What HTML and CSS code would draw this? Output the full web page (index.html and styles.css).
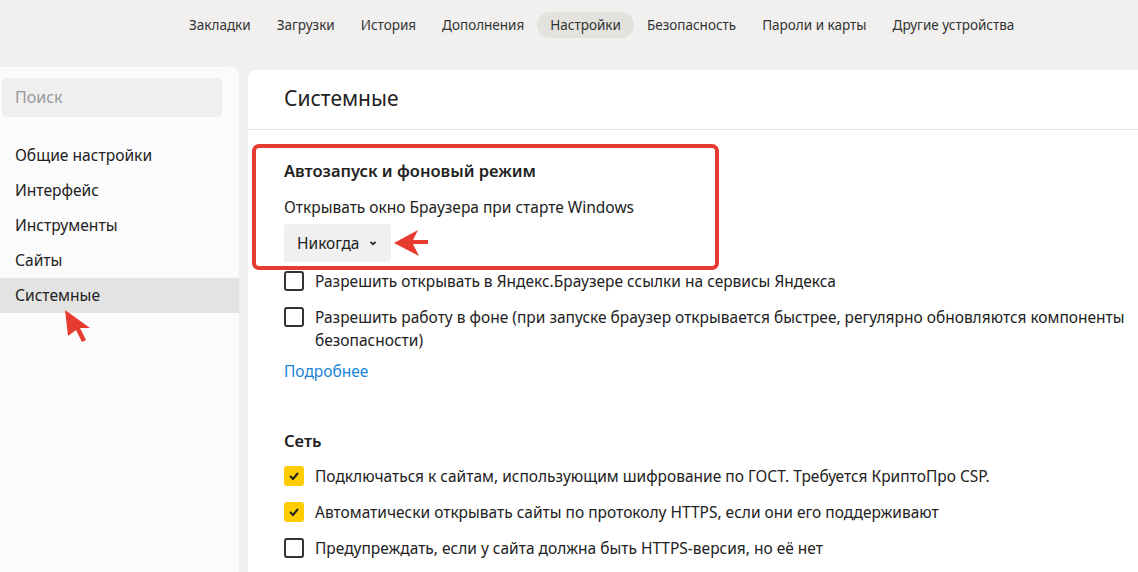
FILE: index.html
```html
<!DOCTYPE html>
<html lang="ru">
<head>
    <meta charset="UTF-8">
    <meta name="viewport" content="width=device-width, initial-scale=1.0">
    <title>Настройки</title>
    <link rel="stylesheet" href="styles.css">
</head>
<body>

<nav class="topnav">
    <a class="nav-item">Закладки</a>
    <a class="nav-item">Загрузки</a>
    <a class="nav-item">История</a>
    <a class="nav-item">Дополнения</a>
    <a class="nav-item active">Настройки</a>
    <a class="nav-item">Безопасность</a>
    <a class="nav-item">Пароли и карты</a>
    <a class="nav-item">Другие устройства</a>
</nav>

<div class="layout">
    <aside class="sidebar">
        <div class="search">Поиск</div>
        <ul class="menu">
            <li>Общие настройки</li>
            <li>Интерфейс</li>
            <li>Инструменты</li>
            <li>Сайты</li>
            <li class="current">Системные</li>
        </ul>
        <svg class="cursor" width="30" height="34" viewBox="0 0 30 34">
            <path d="M1 1 L26 19 L16 19 L22 31 L18 33 L12 21 L4 27 Z" fill="#e63b2e"/>
        </svg>
    </aside>

    <main class="content">
        <h1 class="page-title">Системные</h1>

        <section class="section">
            <div class="highlight">
                <h2 class="section-title">Автозапуск и фоновый режим</h2>
                <p class="label">Открывать окно Браузера при старте Windows</p>
                <div class="select-row">
                    <button class="select">Никогда
                        <svg width="10" height="10" viewBox="0 0 10 10"><path d="M2.5 3.8 L5 6.3 L7.5 3.8" fill="none" stroke="#222" stroke-width="1.7"/></svg>
                    </button>
                    <svg class="pointer" width="36" height="30" viewBox="0 0 36 30">
                        <path d="M1 15 L25 2 L20 12 L35 12 L35 16 L20 16 L26 28 Z" fill="#e63b2e"/>
                    </svg>
                </div>
            </div>

            <label class="check">
                <span class="box"></span>
                <span>Разрешить открывать в Яндекс.Браузере ссылки на сервисы Яндекса</span>
            </label>
            <label class="check">
                <span class="box"></span>
                <span>Разрешить работу в фоне (при запуске браузер открывается быстрее, регулярно обновляются компоненты<br>безопасности)</span>
            </label>
            <a class="more">Подробнее</a>
        </section>

        <section class="section">
            <h2 class="section-title">Сеть</h2>
            <label class="check">
                <span class="box checked"><svg width="14" height="14" viewBox="0 0 14 14"><path d="M3 7 L6 10 L11 4" fill="none" stroke="#222" stroke-width="2"/></svg></span>
                <span>Подключаться к сайтам, использующим шифрование по ГОСТ. Требуется КриптоПро CSP.</span>
            </label>
            <label class="check">
                <span class="box checked"><svg width="14" height="14" viewBox="0 0 14 14"><path d="M3 7 L6 10 L11 4" fill="none" stroke="#222" stroke-width="2"/></svg></span>
                <span>Автоматически открывать сайты по протоколу HTTPS, если они его поддерживают</span>
            </label>
            <label class="check">
                <span class="box"></span>
                <span>Предупреждать, если у сайта должна быть HTTPS-версия, но её нет</span>
            </label>
        </section>
    </main>
</div>

</body>
</html>
```

FILE: styles.css
```css
body {
    font-family: "Noto Sans", "Open Sans", sans-serif;
    margin: 0;
    background-color: #f1f0ee;
    color: #222;
    overflow: hidden;
    height: 572px;
}
.topnav {
    display: flex;
    align-items: center;
    height: 50px;
    padding-left: 176px;
}
.nav-item {
    font-size: 13.5px;
    padding: 4px 13px;
    border-radius: 13px;
    color: #333;
    white-space: nowrap;
}
.nav-item.active {
    background-color: #e3e2df;
}
.layout {
    display: flex;
    gap: 9px;
    margin-top: 17px;
    height: 505px;
}
.sidebar {
    position: relative;
    width: 239px;
    flex-shrink: 0;
    background-color: #fbfbfb;
    border-top-right-radius: 8px;
    padding-top: 11px;
}
.search {
    margin: 0 17px 0 2px;
    height: 39px;
    line-height: 39px;
    padding-left: 13px;
    background-color: #efefef;
    border-radius: 4px;
    color: #999;
    font-size: 16px;
}
.menu {
    list-style: none;
    margin: 21px 0 0;
    padding: 0;
}
.menu li {
    height: 35px;
    line-height: 35px;
    padding-left: 15px;
    font-size: 15.6px;
}
.menu li.current {
    background-color: #e3e3e3;
}
.cursor {
    position: absolute;
    left: 64px;
    top: 242px;
}
.content {
    flex: 1;
    margin-top: 3px;
    background-color: #fff;
    border-top-left-radius: 8px;
    min-width: 0;
}
.page-title {
    margin: 0;
    padding: 14px 0 0 36px;
    height: 45px;
    font-size: 21px;
    font-weight: normal;
    border-bottom: 1px solid #e6e6e6;
}
.section {
    padding: 0 0 0 36px;
}
.highlight {
    margin: 14px 0 0 -32px;
    width: 391px;
    padding: 12px 40px 4px 28px;
    border: 4px solid #e53a2f;
    border-radius: 7px;
}
.section-title {
    margin: 0;
    font-size: 16.5px;
    font-weight: 600;
    line-height: 22px;
}
.label {
    margin: 14px 0 6px;
    font-size: 15.5px;
    line-height: 22px;
}
.select-row {
    display: flex;
    align-items: center;
}
.select {
    font-family: inherit;
    font-size: 15.5px;
    color: #222;
    height: 38px;
    padding: 0 13px;
    border: none;
    border-radius: 4px;
    background-color: #f0f0f0;
    display: flex;
    align-items: center;
    gap: 9px;
}
.pointer {
    margin-left: 2px;
}
.check {
    display: flex;
    align-items: flex-start;
    gap: 11px;
    font-size: 15.5px;
    line-height: 23px;
    margin-top: 13px;
}
.highlight + .check {
    margin-top: 0;
}
.box {
    width: 20px;
    height: 20px;
    box-sizing: border-box;
    border: 2px solid #333;
    border-radius: 3px;
    flex-shrink: 0;
    margin-top: 1px;
    display: flex;
    align-items: center;
    justify-content: center;
}
.box.checked {
    border: none;
    background-color: #ffcc00;
}
.more {
    display: block;
    margin-top: 8px;
    color: #1a85d6;
    font-size: 15.5px;
    line-height: 22px;
}
.section + .section {
    margin-top: 48px;
}
```
